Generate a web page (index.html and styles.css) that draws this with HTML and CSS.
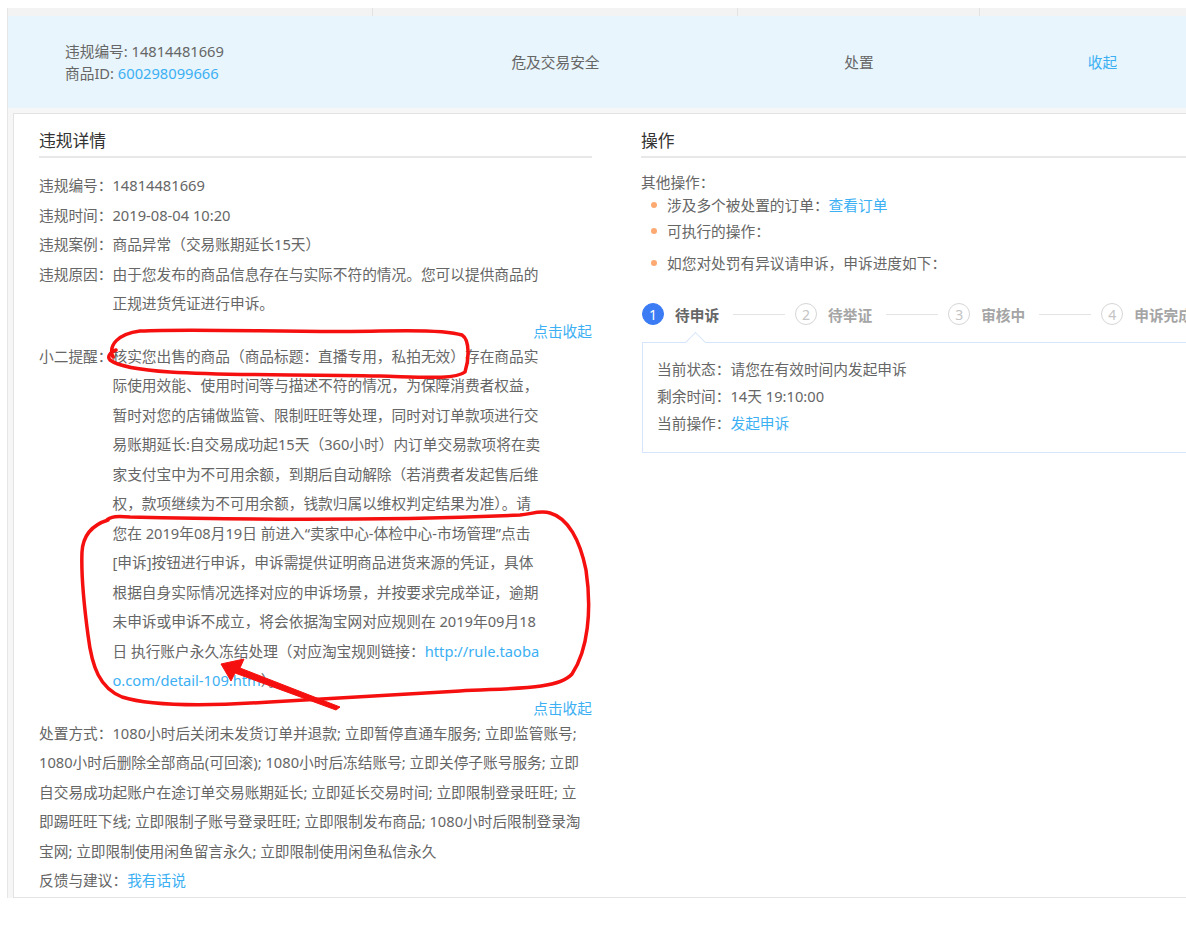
FILE: index.html
```html
<!DOCTYPE html>
<html lang="zh-CN">
<head>
<meta charset="utf-8">
<title>违规详情</title>
<link rel="stylesheet" href="styles.css">
</head>
<body>
<div class="page">
  <div class="table">
    <div class="cols thead">
      <div class="th"></div><div class="th"></div><div class="th"></div><div class="th"></div>
    </div>
    <div class="cols trow">
      <div class="td td-id">
        <div>违规编号: 14814481669</div>
        <div>商品ID: <a class="link">600298099666</a></div>
      </div>
      <div class="td center">危及交易安全</div>
      <div class="td center">处置</div>
      <div class="td center"><a class="link">收起</a></div>
    </div>
    <div class="expand">
      <div class="panel">
        <section class="detail">
          <h3 class="sec-title">违规详情</h3>
          <div class="rows">
            <div class="row"><span class="lbl">违规编号：</span><span class="val">14814481669</span></div>
            <div class="row"><span class="lbl">违规时间：</span><span class="val">2019-08-04 10:20</span></div>
            <div class="row"><span class="lbl">违规案例：</span><span class="val">商品异常（交易账期延长15天）</span></div>
            <div class="row"><span class="lbl">违规原因：</span><span class="val">由于您发布的商品信息存在与实际不符的情况。您可以提供商品的<br>正规进货凭证进行申诉。</span></div>
          </div>
          <div class="collapse"><a class="link">点击收起</a></div>
          <div class="rows tight">
            <div class="row"><span class="lbl">小二提醒：</span><span class="val">核实您出售的商品（商品标题：直播专用，私拍无效）存在商品实<br>际使用效能、使用时间等与描述不符的情况，为保障消费者权益，<br>暂时对您的店铺做监管、限制旺旺等处理，同时对订单款项进行交<br>易账期延长:自交易成功起15天（360小时）内订单交易款项将在卖<br>家支付宝中为不可用余额，到期后自动解除（若消费者发起售后维<br>权，款项继续为不可用余额，钱款归属以维权判定结果为准）。请<br>您在 2019年08月19日 前进入“卖家中心-体检中心-市场管理”点击<br>[申诉]按钮进行申诉，申诉需提供证明商品进货来源的凭证，具体<br>根据自身实际情况选择对应的申诉场景，并按要求完成举证，逾期<br>未申诉或申诉不成立，将会依据淘宝网对应规则在 2019年09月18<br>日 执行账户永久冻结处理（对应淘宝规则链接：<a class="link">http://rule.taoba<br>o.com/detail-109.htm</a>）。</span></div>
          </div>
          <div class="collapse"><a class="link">点击收起</a></div>
          <div class="para">处置方式：1080小时后关闭未发货订单并退款; 立即暂停直通车服务; 立即监管账号;<br>1080小时后删除全部商品(可回滚); 1080小时后冻结账号; 立即关停子账号服务; 立即<br>自交易成功起账户在途订单交易账期延长; 立即延长交易时间; 立即限制登录旺旺; 立<br>即踢旺旺下线; 立即限制子账号登录旺旺; 立即限制发布商品; 1080小时后限制登录淘<br>宝网; 立即限制使用闲鱼留言永久; 立即限制使用闲鱼私信永久</div>
          <div class="para">反馈与建议：<a class="link">我有话说</a></div>
        </section>
        <section class="ops">
          <h3 class="sec-title">操作</h3>
          <div class="other">其他操作：</div>
          <ul class="bullets">
            <li>涉及多个被处置的订单：<a class="link">查看订单</a></li>
            <li>可执行的操作：</li>
            <li class="gap">如您对处罚有异议请申诉，申诉进度如下：</li>
          </ul>
          <div class="steps">
            <div class="step active"><span class="num">1</span><span class="step-txt">待申诉</span></div>
            <span class="step-line"></span>
            <div class="step"><span class="num">2</span><span class="step-txt">待举证</span></div>
            <span class="step-line"></span>
            <div class="step"><span class="num">3</span><span class="step-txt">审核中</span></div>
            <span class="step-line"></span>
            <div class="step"><span class="num">4</span><span class="step-txt">申诉完成</span></div>
          </div>
          <div class="status">
            <div>当前状态：请您在有效时间内发起申诉</div>
            <div>剩余时间：14天 19:10:00</div>
            <div>当前操作：<a class="link">发起申诉</a></div>
          </div>
        </section>
      </div>
    </div>
  </div>
  <svg class="marks" width="1186" height="929" viewBox="0 0 1186 929">
    <path class="pen" d="M113,357 C108,345 118,334 140,331 C200,328 300,333 380,331 C420,330 450,331 462,335 C470,340 469,360 465,372 C455,380 420,377 380,376 C300,374 230,376 170,372 C140,370 118,366 110,360 C107,357 110,352 116,350"/>
    <path class="pen" d="M106,521 C110,516 118,516 130,517 C250,520 400,520 520,515 C532,514 540,510 550,513 C568,518 580,540 586,570 C592,610 588,650 572,674 C558,690 510,688 460,691 C400,695 330,698 270,702 C210,706 150,706 122,697 C100,688 92,668 88,635 C84,605 81,575 82,552 C83,535 92,525 108,520"/>
    <polygon class="arrow" points="221,664 244,659 240,668 340,707 336,710 235,673 231,681"/>
  </svg>
</div>
</body>
</html>
```

FILE: styles.css
```css
* { box-sizing: border-box; margin: 0; padding: 0; }
html, body { width: 1186px; height: 929px; overflow: hidden; background: #fff; }
body {
  font-family: "Noto Sans", "Noto Sans CJK SC", sans-serif;
  font-size: 14.7px;
  color: #666;
}
.page { position: relative; width: 1186px; height: 929px; overflow: hidden; }
.link { color: #3cb0f3; text-decoration: none; }

.table { margin: 8px 0 0 7px; width: 1218px; border-left: 1px solid #e6e6e6; }
.cols { display: grid; grid-template-columns: 365px 365px 242px 1fr; }
.thead { height: 8px; background: #f3f3f3; }
.th { border-right: 1px solid #e2e2e2; }
.trow { height: 92px; background: #e8f5fc; align-items: center; }
.td { line-height: 22px; }
.td-id { padding-left: 57px; }
.center { text-align: center; }

.expand { background: #f6f6f6; padding: 5px 0 0 5px; }
.panel {
  background: #fff;
  border: 1px solid #e3e3e3;
  display: flex;
  gap: 49px;
  padding: 0 0 1px 25px;
}
.detail { width: 553px; flex: none; }
.ops { flex: 1; min-width: 0; }

.sec-title {
  font-size: 16.8px;
  font-weight: normal;
  color: #333;
  line-height: 24px;
  padding: 15px 0 3px;
  border-bottom: 2px solid #e8e8e8;
}

.rows { margin-top: 13px; line-height: 29.5px; }
.rows.tight { margin-top: 0; }
.row { display: flex; white-space: nowrap; }
.lbl { flex: none; }
.collapse { text-align: right; line-height: 22px; margin-top: 1px; }
.para { line-height: 29.5px; white-space: nowrap; }

.other { margin-top: 14px; line-height: 20px; }
.bullets { list-style: none; }
.bullets li { position: relative; padding-left: 26px; line-height: 26px; }
.bullets li::before {
  content: "";
  position: absolute;
  left: 10px;
  top: 10px;
  width: 6px;
  height: 6px;
  border-radius: 50%;
  background: #fcaa72;
}
.bullets li.gap { margin-top: 6px; }

.steps { display: flex; align-items: center; height: 22px; margin: 27px 0 0 1px; white-space: nowrap; }
.step { display: flex; align-items: center; gap: 11px; font-weight: bold; color: #a5a5a5; flex: none; }
.step.active { color: #666; }
.num {
  width: 22px;
  height: 22px;
  border-radius: 50%;
  border: 1px solid #d6d6d6;
  color: #c4c4c4;
  font-weight: normal;
  font-size: 14px;
  display: flex;
  align-items: center;
  justify-content: center;
  flex: none;
}
.step.active .num { background: #3b7cf5; border-color: #3b7cf5; color: #fff; }
.step-line { width: 52px; height: 1px; background: #e3e3e3; margin: 0 10px 0 14px; flex: none; }

.status {
  position: relative;
  margin: 17px 0 0 1px;
  border: 1px solid #d6e5fb;
  padding: 13px 14px 15px;
  line-height: 27px;
}
.status::before {
  content: "";
  position: absolute;
  top: -8px;
  left: 45px;
  width: 14px;
  height: 14px;
  background: #fff;
  border-top: 1px solid #d6e5fb;
  border-left: 1px solid #d6e5fb;
  transform: rotate(45deg);
}

.marks { position: absolute; left: 0; top: 0; pointer-events: none; }
.pen { fill: none; stroke: #f5100f; stroke-width: 3.5; stroke-linecap: round; stroke-linejoin: round; }
.arrow { fill: #f5100f; stroke: #f5100f; stroke-width: 1; stroke-linejoin: round; }
```
